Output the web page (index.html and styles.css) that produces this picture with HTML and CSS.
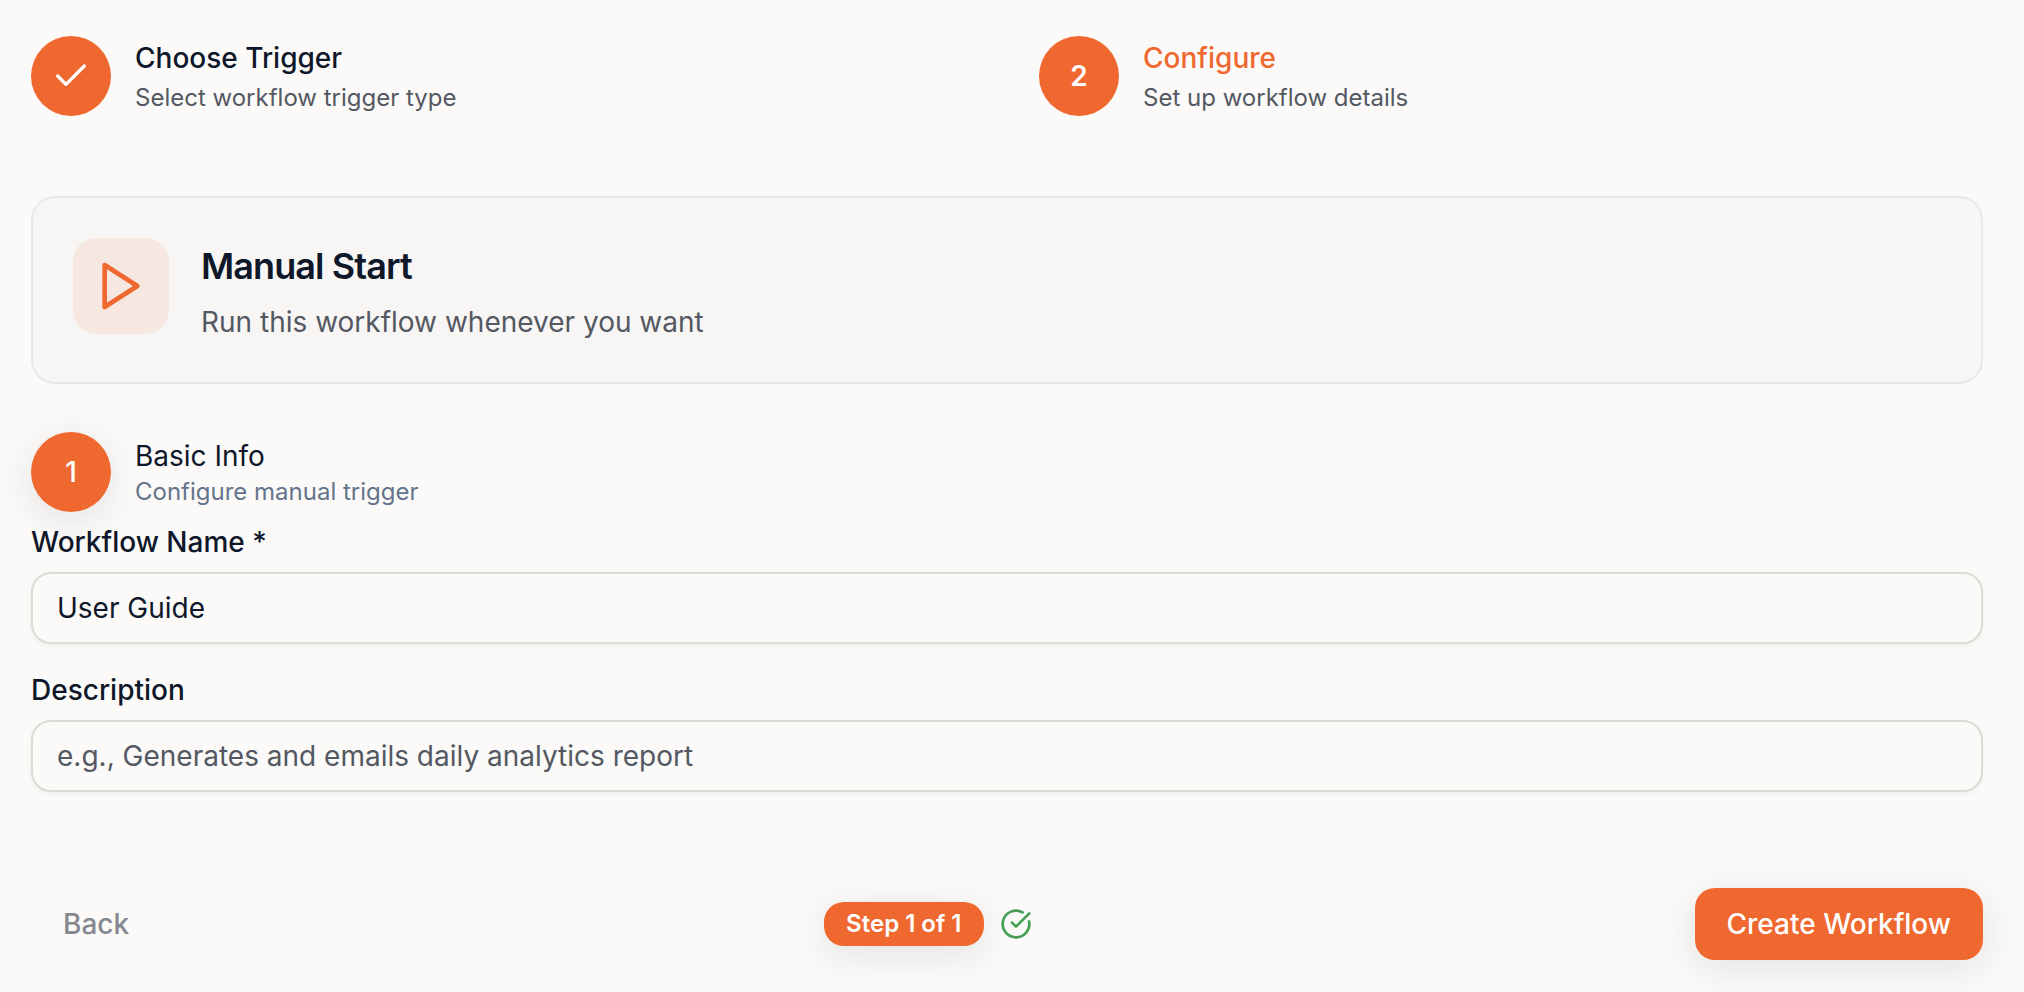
FILE: index.html
```html
<!DOCTYPE html>
<html lang="en">
<head>
<meta charset="UTF-8">
<meta name="viewport" content="width=device-width, initial-scale=1.0">
<title>Create Workflow</title>
<link rel="stylesheet" href="styles.css">
</head>
<body>
  <main class="page">
    <ol class="steps">
      <li class="step">
        <span class="circle">
          <svg width="40" height="40" viewBox="0 0 24 24" fill="none" stroke="currentColor" stroke-width="2" stroke-linecap="round" stroke-linejoin="round" aria-hidden="true"><path d="M20 6 9 17l-5-5"/></svg>
        </span>
        <div class="step-text">
          <p class="step-title">Choose Trigger</p>
          <p class="step-sub">Select workflow trigger type</p>
        </div>
      </li>
      <li class="step active">
        <span class="circle">2</span>
        <div class="step-text">
          <p class="step-title">Configure</p>
          <p class="step-sub">Set up workflow details</p>
        </div>
      </li>
    </ol>

    <section class="card">
      <div class="card-icon">
        <svg width="56" height="56" viewBox="0 0 24 24" fill="none" stroke="currentColor" stroke-width="2" stroke-linecap="round" stroke-linejoin="round" aria-hidden="true"><polygon points="5 3 19 12 5 21 5 3"/></svg>
      </div>
      <div class="card-text">
        <h2>Manual Start</h2>
        <p>Run this workflow whenever you want</p>
      </div>
    </section>

    <form class="form">
      <div class="section-head">
        <span class="circle raised">1</span>
        <div>
          <h3>Basic Info</h3>
          <p>Configure manual trigger</p>
        </div>
      </div>
      <div class="fields">
        <div class="field">
          <label for="name">Workflow Name *</label>
          <input type="text" id="name" name="name" value="User Guide" required>
        </div>
        <div class="field">
          <label for="description">Description</label>
          <input type="text" id="description" name="description" placeholder="e.g., Generates and emails daily analytics report">
        </div>
      </div>
      <div class="footer">
        <button type="button" class="btn back" disabled>Back</button>
        <div class="progress">
          <span class="badge">Step 1 of 1</span>
          <svg width="32" height="32" viewBox="0 0 24 24" fill="none" stroke="currentColor" stroke-width="2" stroke-linecap="round" stroke-linejoin="round" aria-hidden="true"><path d="M21.801 10A10 10 0 1 1 17 3.335"/><path d="m9 11 3 3L22 4"/></svg>
        </div>
        <button type="submit" class="btn create">Create Workflow</button>
      </div>
    </form>
  </main>
</body>
</html>
```
FILE: styles.css
```css
* {
  box-sizing: border-box;
}

body {
  margin: 0;
  background-color: #fbfaf8;
  color: #0f172a;
  font-family: Inter, sans-serif;
  font-size: 28px;
  line-height: 40px;
  font-optical-sizing: none;
  -webkit-font-smoothing: antialiased;
}

h2, h3, p, ol {
  margin: 0;
  padding: 0;
}

.page {
  padding: 36px 41px 32px 31px;
}

.steps {
  display: grid;
  grid-template-columns: 1fr 1fr;
  gap: 64px;
  list-style: none;
}

.step, .section-head {
  display: flex;
  align-items: center;
  gap: 24px;
}

.circle {
  display: flex;
  align-items: center;
  justify-content: center;
  flex-shrink: 0;
  width: 80px;
  height: 80px;
  border-radius: 50%;
  background-color: #ef682f;
  color: #fff;
  font-weight: 600;
}

.raised {
  font-weight: 500;
  box-shadow: 0 8px 40px rgba(15, 23, 42, 0.1);
}

.step-text {
  display: flex;
  flex-direction: column;
  gap: 4px;
}

.step-title {
  font-weight: 500;
}

.active .step-title {
  color: #ef682f;
}

.step-sub {
  color: #535862;
  font-size: 24px;
  line-height: 32px;
}

.card {
  display: flex;
  align-items: flex-start;
  gap: 32px;
  margin-top: 80px;
  padding: 40px;
  border: 2px solid #e9e8e6;
  border-radius: 24px;
  background-color: #f7f6f4;
}

.card-icon {
  display: flex;
  align-items: center;
  justify-content: center;
  width: 96px;
  height: 96px;
  border-radius: 24px;
  background-color: #f6e7e0;
  color: #ef682f;
}

.card h2 {
  margin-bottom: 8px;
  font-size: 36px;
  font-weight: 600;
  line-height: 56px;
  letter-spacing: -0.025em;
}

.card p {
  color: #535862;
}

.section-head {
  margin-top: 48px;
}

.section-head h3 {
  font-size: 28px;
  font-weight: 400;
}

.section-head p {
  color: #64748b;
  font-size: 24px;
  line-height: 32px;
}

.fields {
  display: flex;
  flex-direction: column;
  gap: 32px;
  margin-top: 16px;
}

.field {
  display: flex;
  flex-direction: column;
  gap: 16px;
}

.field label {
  font-weight: 500;
  line-height: 28px;
}

.field input {
  width: 100%;
  height: 72px;
  padding: 0 24px;
  border: 2px solid #dcdbd5;
  border-radius: 20px;
  background-color: #fbfaf8;
  color: #0f172a;
  font: inherit;
  box-shadow: 0 2px 4px rgba(0, 0, 0, 0.05);
}

.field input::placeholder {
  color: #535862;
  opacity: 1;
}

.footer {
  display: flex;
  align-items: center;
  justify-content: space-between;
  margin-top: 96px;
}

.btn {
  height: 72px;
  padding: 0 32px;
  border: none;
  border-radius: 20px;
  background: none;
  font: inherit;
  font-weight: 500;
  cursor: pointer;
}

.back {
  color: #868891;
  cursor: default;
}

.create {
  background-color: #ef682f;
  color: #fff;
  box-shadow: 0 8px 40px rgba(15, 23, 42, 0.1);
}

.progress {
  display: flex;
  align-items: center;
  gap: 16px;
  color: #45a053;
}

.badge {
  padding: 6px 22px;
  border-radius: 20px;
  background-color: #ef682f;
  color: #fff;
  font-size: 24px;
  font-weight: 600;
  line-height: 32px;
  box-shadow: 0 8px 40px rgba(15, 23, 42, 0.1);
}
```
